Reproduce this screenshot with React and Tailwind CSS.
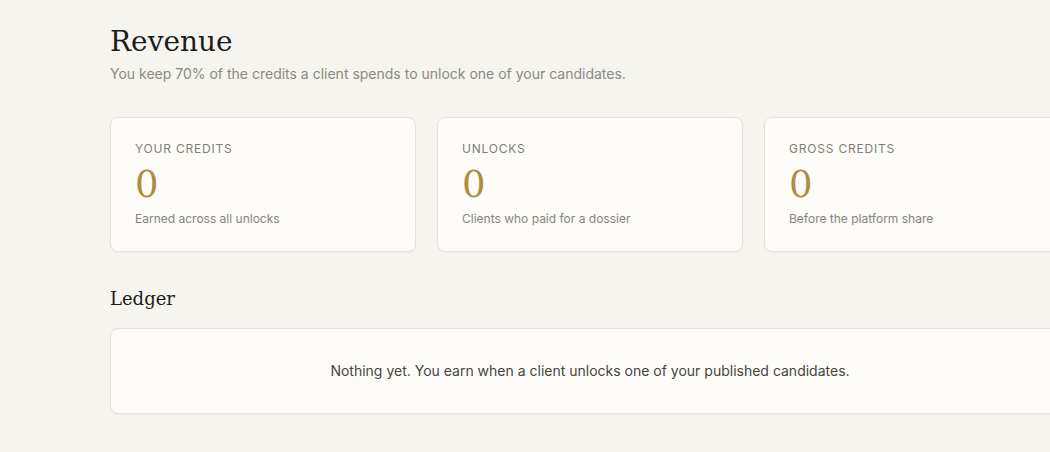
export default function App() {
  const cards = [
    { label: "Your credits", value: "0", desc: "Earned across all unlocks" },
    { label: "Unlocks", value: "0", desc: "Clients who paid for a dossier" },
    { label: "Gross credits", value: "0", desc: "Before the platform share" },
  ];
  const serif = { fontFamily: '"DejaVu Serif", "Liberation Serif", serif' };
  return (
    <div className="w-[1050px] h-[452px] overflow-hidden bg-[#f5f4ef]" style={{ fontFamily: 'Inter, "Noto Sans", sans-serif' }}>
      <div className="w-[960px] ml-[110px] pt-[22px]">
        <h1 className="text-[28px] leading-[40px] text-[#1c1c1a] font-normal" style={serif}>Revenue</h1>
        <p className="mt-[2px] text-[14px] leading-[20px] text-[#8a8a82]">
          You keep 70% of the credits a client spends to unlock one of your candidates.
        </p>
        <div className="mt-[33px] grid grid-cols-3 gap-[21px]">
          {cards.map((c) => (
            <div key={c.label} className="h-[135px] rounded-[8px] border border-[#e4e1d9] bg-[#fdfcf8] shadow-[0_1px_2px_rgba(0,0,0,0.04)] pl-[24px] pt-[23px]">
              <div className="text-[12px] leading-[16px] uppercase tracking-[0.8px] text-[#7f7e77]">{c.label}</div>
              <div className="mt-[7px] text-[37px] leading-[42px] text-[#b08d3e]" style={serif}>{c.value}</div>
              <div className="mt-[5px] text-[12px] leading-[16px] text-[#85847d]">{c.desc}</div>
            </div>
          ))}
        </div>
        <h2 className="mt-[33px] text-[18px] leading-[28px] text-[#1c1c1a] font-normal" style={serif}>Ledger</h2>
        <div className="mt-[15px] h-[86px] rounded-[8px] border border-[#e4e1d9] bg-[#fdfcf8] shadow-[0_1px_2px_rgba(0,0,0,0.04)] flex items-center justify-center">
          <p className="text-[14px] leading-[20px] text-[#45453f]">
            Nothing yet. You earn when a client unlocks one of your published candidates.
          </p>
        </div>
      </div>
    </div>
  );
}
